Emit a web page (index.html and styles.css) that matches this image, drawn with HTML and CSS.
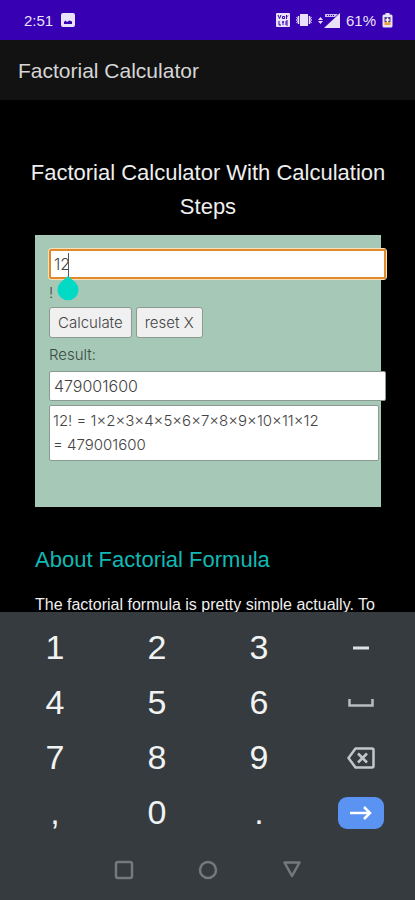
FILE: index.html
```html
<!DOCTYPE html>
<html lang="en">
<head>
<meta charset="utf-8">
<meta name="viewport" content="width=device-width, initial-scale=1">
<title>Factorial Calculator</title>
<link rel="stylesheet" href="styles.css">
</head>
<body>
<div class="status">
  <span class="clock">2:51</span>
  <svg class="picture" width="14" height="14" viewBox="0 0 14 14"><rect width="14" height="14" rx="2" fill="#e9e2fa"/><path d="M3 11V9l1.500-1.500L6 9l2.500-1.500L11 8.500V11z" fill="#3700b3"/></svg>
  <span class="status-right">
    <svg width="14" height="14" viewBox="0 0 14 14"><rect width="14" height="14" rx="1" fill="#e9e2fa"/><path d="M2 2l1.500 3.500L5 2M6.500 3.500h2v2h-2zM10.500 2v4M12 2.500l-1.500 1.500M3 8v4h2M7 12V8M6 9h2M10 12V8h2M10 10h2M10 12h2" fill="none" stroke="#3700b3"/></svg>
    <svg width="16" height="14" viewBox="0 0 16 14"><path d="M4 1h8v12H4z" fill="#e9e2fa"/><path d="M2.500 3v8M13.500 3v8" stroke="#e9e2fa" stroke-width="1.500"/><path d="M.5 4l1 1.500-1 1.500 1 1.500-1 1.500M15.500 4l-1 1.500 1 1.500-1 1.500 1 1.500" stroke="#e9e2fa" fill="none"/></svg>
    <svg width="22" height="15" viewBox="0 0 22 15"><path d="M22 0v15H6z" fill="#e9e2fa"/><path d="M7 1h13l-3 3H7z" fill="#c9bbee"/><path d="M9 2.500h8" stroke="#3700b3" stroke-dasharray="1 1"/><path d="M2.500 4L5 7H0zM2.500 11L0 8h5z" fill="#e9e2fa"/></svg>
    <span class="percent">61%</span>
    <svg width="11" height="15" viewBox="0 0 11 15"><path d="M3.500 0h4v1.500H9q1.500 0 1.500 1.500v10q0 1.500-1.500 1.500H2Q.5 14.500.5 13V3Q.5 1.500 2 1.500h1.500z" fill="#e9e2fa"/><path d="M2.500 4h6v5h-6z" fill="#51358f"/><path d="M2.500 9h6v3h-6z" fill="#e9a23b"/><path d="M5.500 4.500v5M3.500 7h4" stroke="#fff" stroke-width="1.500"/></svg>
  </span>
</div>
<header class="appbar">Factorial Calculator</header>
<main class="page">
  <h1>Factorial Calculator With Calculation Steps</h1>
  <form class="panel">
    <div class="number-row">
      <input class="field focused" id="number" type="text" value="12" aria-label="Number">
      <svg class="handle" width="22" height="48" viewBox="0 0 22 48"><path d="M11.500 0v24" stroke="#555"/><path d="M11 23l7.500 6.500a10.500 10.500 0 1 1-15 0z" fill="#03dac5"/></svg>
    </div>
    <label class="bang" for="number">!</label>
    <div class="actions">
      <button type="button">Calculate</button>
      <button type="button">reset X</button>
    </div>
    <label class="result" for="result">Result:</label>
    <input class="field" id="result" type="text" value="479001600">
    <textarea class="steps" aria-label="Calculation steps" rows="2">12! = 1×2×3×4×5×6×7×8×9×10×11×12
= 479001600</textarea>
  </form>
  <h2>About Factorial Formula</h2>
  <p>The factorial formula is pretty simple actually. To</p>
</main>
<section class="keyboard" aria-label="Numeric keyboard">
  <div class="keys">
    <button>1</button><button>2</button><button>3</button>
    <button aria-label="Minus"><svg width="16" height="4" viewBox="0 0 16 4"><path d="M0 2h16" stroke="#dfe1e2" stroke-width="3"/></svg></button>
    <button>4</button><button>5</button><button>6</button>
    <button aria-label="Space"><svg width="26" height="8" viewBox="0 0 26 8"><path d="M1.500 0v6.500h23V0" fill="none" stroke="#b9bdbf" stroke-width="2.500"/></svg></button>
    <button>7</button><button>8</button><button>9</button>
    <button aria-label="Delete"><svg width="28" height="22" viewBox="0 0 28 22"><path d="M8.500 1.500H25q1.500 0 1.500 1.500v16q0 1.500-1.500 1.500H8.500L1.500 11z" fill="none" stroke="#c3c7c9" stroke-width="2.500" stroke-linejoin="round"/><path d="M11 6.500l9 9M20 6.500l-9 9" stroke="#c3c7c9" stroke-width="2.500"/></svg></button>
    <button>,</button><button>0</button><button>.</button>
    <button aria-label="Next"><span class="go"><svg width="22" height="14" viewBox="0 0 22 14"><path d="M0 7h20M14 1l6 6-6 6" fill="none" stroke="#fff" stroke-width="2.500"/></svg></span></button>
  </div>
  <nav class="nav">
    <button aria-label="Recent apps"><svg width="20" height="20" viewBox="0 0 20 20"><rect x="2" y="2" width="16" height="16" rx="2" fill="none" stroke="#75797b" stroke-width="2.500"/></svg></button>
    <button aria-label="Home"><svg width="20" height="20" viewBox="0 0 20 20"><circle cx="10" cy="10" r="8" fill="none" stroke="#75797b" stroke-width="2.500"/></svg></button>
    <button aria-label="Back"><svg width="20" height="20" viewBox="0 0 20 20"><path d="M2.500 2.500h15L10 16z" fill="none" stroke="#75797b" stroke-width="2.500" stroke-linejoin="round"/></svg></button>
  </nav>
</section>
</body>
</html>
```
FILE: styles.css
```css
* { box-sizing: border-box; }

body {
  margin: 0;
  height: 100vh;
  display: flex;
  flex-direction: column;
  background: #000;
  color: #eee;
  font-family: "Liberation Sans", Arial, sans-serif;
}

svg { display: block; }

button, input, textarea { font: inherit; margin: 0; }

.status {
  flex: none;
  height: 40px;
  display: flex;
  align-items: center;
  padding: 0 22px 0 24px;
  background: #3700b3;
  color: #e9e2fa;
  font-size: 15px;
}

.picture { margin-left: 8px; }

.status-right {
  margin-left: auto;
  display: flex;
  align-items: center;
  gap: 6px;
}

.appbar {
  flex: none;
  height: 60px;
  padding: 0 18px;
  background: #121212;
  color: #d6d6d6;
  font-size: 21px;
  line-height: 62px;
}

.page {
  flex: 1;
  min-height: 0;
  overflow: hidden;
  padding: 56px 34px 0 35px;
}

h1, h2 {
  margin: 0;
  font-weight: 400;
  font-size: 22px;
  line-height: 34px;
}

h1 {
  margin: 0 -24px 11px;
  text-align: center;
}

h2 {
  margin-top: 36px;
  color: #12b8b3;
}

p {
  margin: 16px 0 0;
  font-size: 16px;
  line-height: 24px;
  white-space: nowrap;
}

.panel {
  height: 272px;
  padding: 14px 2px 0 14px;
  background: #a5c8b7;
  color: #3c4a43;
  font-family: Inter, "Liberation Sans", sans-serif;
  font-weight: 300;
  font-size: 15px;
}

.number-row { position: relative; }

.field {
  display: block;
  width: calc(100% + 7px);
  height: 30px;
  padding: 0 4px;
  border: 1px solid #8d9a93;
  border-radius: 2px;
  background: #fff;
  color: #444;
  font-size: 16px;
}

.focused {
  border: 2px solid #e08a2c;
  padding: 0 3px;
  outline: 1px solid #f8dfb8;
}

.handle {
  position: absolute;
  left: 8px;
  top: 4px;
}

.bang, .result {
  display: block;
  line-height: 28px;
}

.actions {
  display: flex;
  gap: 4px;
}

.actions button {
  height: 31px;
  padding: 0 8px;
  border: 1px solid #8d9a93;
  border-radius: 3px;
  background: #f0f0f0;
  color: #444;
}

.result { line-height: 33px; }

.steps {
  display: block;
  width: 100%;
  height: 56px;
  margin-top: 4px;
  padding: 3px;
  border: 1px solid #8d9a93;
  border-radius: 2px;
  background: #fff;
  color: #444;
  line-height: 24px;
  resize: none;
  overflow: hidden;
}

.keyboard {
  flex: none;
  padding: 8px 3px 0 4px;
  background: #353b3e;
}

.keys {
  display: grid;
  grid-template-columns: repeat(4, 1fr);
  grid-auto-rows: 55px;
}

.keyboard button {
  display: flex;
  align-items: center;
  justify-content: center;
  padding: 0;
  border: 0;
  background: none;
  color: #f1f3f3;
}

.keys button { font-size: 34px; }

.go {
  width: 46px;
  height: 32px;
  display: flex;
  align-items: center;
  justify-content: center;
  border-radius: 9px;
  background: #5a93f2;
}

.nav {
  height: 60px;
  display: flex;
  align-items: center;
  justify-content: center;
  gap: 64px;
}
```
